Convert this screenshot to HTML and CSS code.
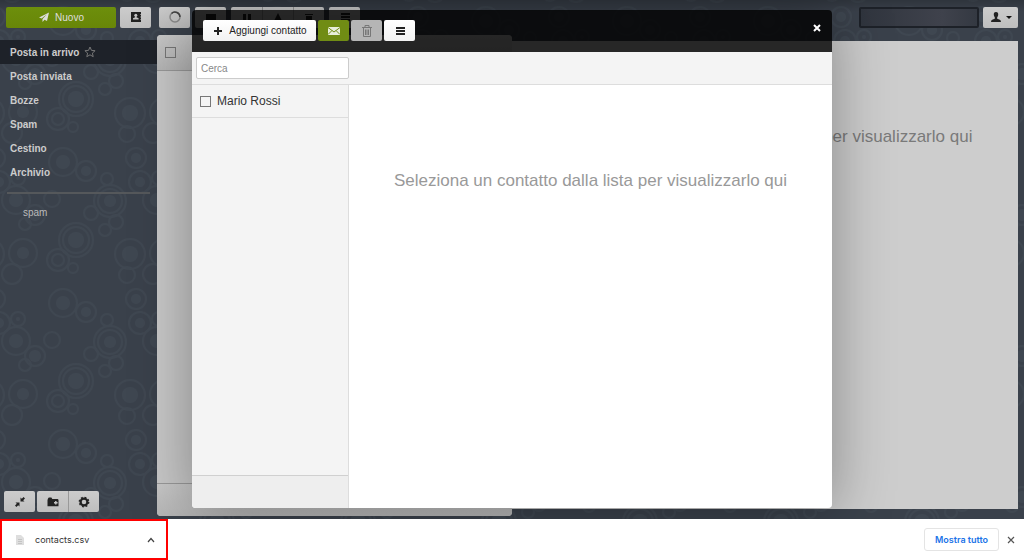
FILE: index.html
```
<!DOCTYPE html>
<html lang="it">
<head>
<meta charset="utf-8">
<title>Posta in arrivo</title>
<link rel="stylesheet" href="styles.css">
</head>
<body>
<div class="app">
  <header class="topbar">
    <div class="topbar-side">
      <button class="btn btn-new" type="button">
        <svg class="icon" viewBox="0 0 12 12" aria-hidden="true"><path fill="currentColor" d="M11 1.500 1 6.500l2.600 1L9 3.300 4.500 8v3l2-2.200L9 10z"/></svg>
        Nuovo
      </button>
      <button class="btn dim" type="button" aria-label="Rubrica">
        <svg class="icon" viewBox="0 0 12 12" aria-hidden="true"><path fill="currentColor" d="M1 1h10v2h-.6v1h.6v1.600h-.6v1h.6v1.600h-.6V9h.6v2H1z"/><circle cx="5.800" cy="4.300" r="1.500" fill="#c5c5c5"/><path fill="#c5c5c5" d="M5.200 5h1.200v1.200L8.600 7.300v1.200H3V7.300l2.200-1.100z"/></svg>
      </button>
    </div>
    <div class="topbar-tools">
      <button class="btn dim" type="button" aria-label="Aggiorna">
        <svg class="icon" viewBox="0 0 12 12" aria-hidden="true"><circle cx="6" cy="6" r="5" fill="none" stroke="#8a8a8a" stroke-width="1.500"/><path d="M2.500 2.500a5 5 0 0 1 8.500 3.500" fill="none" stroke="#444" stroke-width="1.500"/></svg>
      </button>
      <button class="btn dim" type="button" aria-label="Rispondi">
        <svg class="icon" viewBox="0 0 12 12" aria-hidden="true"><path fill="currentColor" d="M1 3h10v7H1z"/></svg>
      </button>
      <div class="group">
        <button class="btn dim" type="button" aria-label="Sposta"><svg class="icon" viewBox="0 0 12 12" aria-hidden="true"><path fill="currentColor" d="M2 3h3v7H2zM7 3h3v7H7z"/></svg></button>
        <button class="btn dim" type="button" aria-label="Segnala"><svg class="icon" viewBox="0 0 12 12" aria-hidden="true"><path fill="currentColor" d="M6 2l4 8H2z"/></svg></button>
        <button class="btn dim" type="button" aria-label="Elimina"><svg class="icon" viewBox="0 0 12 12" aria-hidden="true"><path fill="currentColor" d="M2 3h8v1H2zM3 5h6v6H3z"/></svg></button>
      </div>
      <button class="btn dim" type="button" aria-label="Altro">
        <svg class="icon" viewBox="0 0 12 12" aria-hidden="true"><path fill="currentColor" d="M2 2h9v2H2zM2 5h9v2H2zM2 8h9v2H2z"/></svg>
      </button>
    </div>
    <input class="account" type="text" aria-label="Account" readonly>
    <button class="btn dim user" type="button" aria-label="Profilo">
      <svg class="icon" viewBox="0 0 12 12" aria-hidden="true"><path fill="currentColor" d="M6 1C4.300 1 3.600 2.300 3.800 4c.1 1 .5 1.700 1 2.200v1.500C3 8.300 1 8.600 1 11h10c0-2.400-2-2.700-3.800-3.300V6.200c.5-.5.9-1.200 1-2.200C8.400 2.300 7.700 1 6 1z"/></svg>
      <span class="caret"></span>
    </button>
  </header>

  <div class="work">
    <aside class="sidebar">
      <nav class="folders">
        <a class="folder active" href="#">Posta in arrivo
          <svg class="icon star" viewBox="0 0 12 12" aria-hidden="true"><path fill="none" stroke="currentColor" d="M6 1l1.500 3.400 3.600.3-2.700 2.400.8 3.600L6 8.800l-3.200 1.900.8-3.600L.9 4.700l3.600-.3z"/></svg>
        </a>
        <a class="folder" href="#">Posta inviata</a>
        <a class="folder" href="#">Bozze</a>
        <a class="folder" href="#">Spam</a>
        <a class="folder" href="#">Cestino</a>
        <a class="folder" href="#">Archivio</a>
      </nav>
      <hr class="rule">
      <a class="subfolder" href="#">spam</a>
      <div class="side-actions">
        <button class="btn dim" type="button" aria-label="Comprimi">
          <svg class="icon" viewBox="0 0 12 12" aria-hidden="true"><path fill="currentColor" d="M6.500 1.500v4h4L9.200 4.200 11 2.400 9.600 1 7.800 2.800zM1.500 6.500h4v4L4.200 9.200 2.400 11 1 9.600l1.800-1.800z"/></svg>
        </button>
        <div class="group">
          <button class="btn dim" type="button" aria-label="Cartelle">
            <svg class="icon" viewBox="0 0 12 12" aria-hidden="true"><path fill="currentColor" d="M1 2.500 1.800 1.600h2.600l.9 1.400h5.400l.8.800v6.400H.5V4z"/><path fill="#c5c5c5" d="M7 6h1.100V4.900h1.400V6h1.100v1.400H9.500v1.100H8.100V7.400H7z"/></svg>
          </button>
          <button class="btn dim" type="button" aria-label="Impostazioni">
            <svg class="icon" viewBox="0 0 12 12" aria-hidden="true"><circle cx="6" cy="6" r="3.400" fill="none" stroke="currentColor" stroke-width="2.200"/><circle cx="6" cy="6" r="4.700" fill="none" stroke="currentColor" stroke-width="1.400" stroke-dasharray="1.850 1.840"/></svg>
          </button>
        </div>
      </div>
    </aside>
    <section class="messages" aria-label="Messaggi">
      <div class="messages-head"><input class="check" type="checkbox" aria-label="Seleziona tutti"></div>
      <div class="messages-foot"></div>
    </section>
    <main class="reader">
      <p class="hint">Seleziona un messaggio dalla lista per visualizzarlo qui</p>
    </main>
  </div>

  <div class="modal" role="dialog" aria-label="Contatti">
    <div class="modal-head">
      <button class="btn btn-add" type="button">
        <svg class="icon" viewBox="0 0 12 12" aria-hidden="true"><path fill="currentColor" d="M5 2h2v3h3v2H7v3H5V7H2V5h3z"/></svg>
        Aggiungi contatto
      </button>
      <button class="btn btn-mail" type="button" aria-label="Scrivi">
        <svg class="icon" viewBox="0 0 12 12" aria-hidden="true"><path fill="#e8eedb" d="M0 2h12v8H0z"/><path fill="none" stroke="#708c14" d="M0 2.500 6 7l6-4.500M0 9.500l4-4M12 9.500l-4-4"/></svg>
      </button>
      <button class="btn btn-off" type="button" aria-label="Elimina contatto" disabled>
        <svg class="icon" viewBox="0 0 12 12" aria-hidden="true"><path fill="none" stroke="currentColor" d="M1 2.500h10M4 2V.5h4V2M2.500 3v8.500h7V3M4.500 4.500V10M6 4.500V10M7.500 4.500V10"/></svg>
      </button>
      <button class="btn" type="button" aria-label="Menu">
        <svg class="icon" viewBox="0 0 12 12" aria-hidden="true"><path fill="currentColor" d="M2 2h9v2H2zM2 5h9v2H2zM2 8h9v2H2z"/></svg>
      </button>
      <button class="close" type="button" aria-label="Chiudi">
        <svg class="glyph" viewBox="0 0 8 8" aria-hidden="true"><path stroke="#fff" stroke-width="2" d="m1 1 6 6M7 1 1 7"/></svg>
      </button>
    </div>
    <div class="modal-search"><input class="search" type="search" placeholder="Cerca" aria-label="Cerca"></div>
    <div class="modal-body">
      <div class="contacts">
        <label class="contact"><input class="check" type="checkbox">Mario Rossi</label>
        <div class="contacts-foot"></div>
      </div>
      <p class="hint">Seleziona un contatto dalla lista per visualizzarlo qui</p>
    </div>
  </div>
</div>

<footer class="downloads">
  <button class="download" type="button">
    <svg class="icon" viewBox="0 0 12 12" aria-hidden="true"><path fill="#dedede" d="M2 1h5l3 3v7H2z"/><path stroke="#c4c4c4" d="M4 5.500h4M4 7.500h4M4 9.500h4"/></svg>
    <span class="filename">contacts.csv</span>
    <svg class="glyph" viewBox="0 0 8 8" aria-hidden="true"><path fill="none" stroke="#444" stroke-width="1.200" d="m1 6 3-3.500L7 6"/></svg>
  </button>
  <button class="show-all" type="button">Mostra tutto</button>
  <button class="close-bar" type="button" aria-label="Chiudi barra">
    <svg class="glyph" viewBox="0 0 8 8" aria-hidden="true"><path stroke="#555" stroke-width="1.200" d="m1 1 6 6M7 1 1 7"/></svg>
  </button>
</footer>
</body>
</html>
```
FILE: styles.css
```
* { box-sizing: border-box; }
body {
  margin: 0;
  height: 100vh;
  display: flex;
  flex-direction: column;
  overflow: hidden;
  font-family: "Liberation Sans", Arial, sans-serif;
  font-size: 10px;
  color: #333;
}
button, input { font: inherit; color: inherit; margin: 0; }
button { border: 0; background: none; padding: 0; }
a { text-decoration: none; }
.icon { width: 12px; height: 12px; flex: none; }
.glyph { width: 8px; height: 8px; flex: none; }

.app {
  position: relative;
  flex: 1;
  min-height: 0;
  display: flex;
  flex-direction: column;
  overflow: hidden;
  background-color: #3a414b;
  background-image: url("data:image/svg+xml,%3Csvg xmlns='http://www.w3.org/2000/svg' width='141' height='141'%3E%3Cg fill='none' stroke='%233f4751' stroke-width='2'%3E%3Ccircle cx='63' cy='17' r='14'/%3E%3Ccircle cx='86' cy='26' r='10'/%3E%3Ccircle cx='18' cy='33' r='7'/%3E%3Ccircle cx='107' cy='34' r='6'/%3E%3Ccircle cx='136' cy='13' r='10'/%3E%3Ccircle cx='-5' cy='13' r='10'/%3E%3Ccircle cx='140' cy='37' r='11'/%3E%3Ccircle cx='-1' cy='37' r='11'/%3E%3Ccircle cx='16' cy='55' r='14'/%3E%3Ccircle cx='52' cy='54' r='8'/%3E%3Ccircle cx='110' cy='56' r='16'/%3E%3Ccircle cx='110' cy='56' r='12'/%3E%3Ccircle cx='35' cy='70' r='10'/%3E%3Ccircle cx='25' cy='79' r='6'/%3E%3Ccircle cx='91' cy='68' r='7'/%3E%3Ccircle cx='116' cy='77' r='7'/%3E%3Ccircle cx='105' cy='85' r='6'/%3E%3Ccircle cx='76' cy='95' r='17'/%3E%3Ccircle cx='76' cy='95' r='13'/%3E%3Ccircle cx='23' cy='108' r='14'/%3E%3Ccircle cx='58' cy='115' r='11'/%3E%3Ccircle cx='58' cy='115' r='6'/%3E%3Ccircle cx='73' cy='123' r='5'/%3E%3Ccircle cx='130' cy='109' r='15'/%3E%3Ccircle cx='-11' cy='109' r='15'/%3E%3Ccircle cx='12' cy='129' r='10'/%3E%3Ccircle cx='127' cy='130' r='8'/%3E%3C/g%3E%3Cg fill='%233f4751'%3E%3Ccircle cx='63' cy='17' r='7'/%3E%3Ccircle cx='86' cy='26' r='5'/%3E%3Ccircle cx='18' cy='33' r='2'/%3E%3Ccircle cx='16' cy='55' r='7'/%3E%3Ccircle cx='110' cy='56' r='6'/%3E%3Ccircle cx='35' cy='70' r='6'/%3E%3Ccircle cx='76' cy='95' r='8'/%3E%3Ccircle cx='23' cy='108' r='6'/%3E%3Ccircle cx='130' cy='109' r='8'/%3E%3Ccircle cx='136' cy='13' r='5'/%3E%3Ccircle cx='140' cy='37' r='5'/%3E%3Ccircle cx='-1' cy='37' r='5'/%3E%3C/g%3E%3C/svg%3E");
  background-position: 0 4px;
}

.btn {
  display: inline-flex;
  align-items: center;
  justify-content: center;
  gap: 5px;
  width: 31px;
  height: 21px;
  flex: none;
  border-radius: 2px;
  background: linear-gradient(#fff, #f2f2f2);
  color: #222;
}
.dim { background: linear-gradient(#ccc, #bebebe); }
.group { display: flex; }
.group .btn { border-radius: 0; }
.group .btn + .btn { border-left: 1px solid #999; }
.group .btn:first-child { border-radius: 2px 0 0 2px; }
.group .btn:last-child { border-radius: 0 2px 2px 0; }

.topbar {
  display: flex;
  align-items: center;
  height: 35px;
  flex: none;
  padding: 0 6px 1px;
  background: linear-gradient(rgba(0, 0, 0, .2), rgba(0, 0, 0, 0) 12px);
}
.topbar-side { display: flex; gap: 4px; width: 153px; }
.btn-new { width: 110px; background: linear-gradient(#6d8f0c, #688608); color: #ddd; }
.topbar-tools { display: flex; gap: 5px; flex: 1; }
.account {
  width: 120px;
  height: 21px;
  margin-right: 4px;
  border: 2px solid #1d2128;
  border-radius: 2px;
  background: linear-gradient(90deg, #30353e, #3f424c 70%, #343942);
}
.user { width: 35px; gap: 4px; }
.caret { border: 3px solid transparent; border-top-color: #111; border-bottom: 0; }

.work { flex: 1; min-height: 0; display: flex; padding-right: 6px; }

.sidebar {
  width: 157px;
  flex: none;
  display: flex;
  flex-direction: column;
  padding: 5px 0 7px;
}
.folder {
  display: flex;
  align-items: center;
  gap: 5px;
  height: 24px;
  padding-left: 10px;
  font-weight: bold;
  color: #ccc;
}
.folder.active { background: #1e2229; }
.star { color: #777; }
.rule { width: 143px; height: 2px; margin: 8px 0 0 7px; border: 0; background: #55585b; }
.subfolder { padding: 13px 0 0 23px; color: #bbb; }
.side-actions { display: flex; gap: 2px; margin-top: auto; padding-left: 4px; }

.messages {
  width: 355px;
  flex: none;
  display: flex;
  flex-direction: column;
  margin-bottom: 3px;
  border-radius: 4px;
  background: #c8c8c8;
}
.messages-head { height: 36px; padding: 12px 8px; border-bottom: 1px solid #999; border-radius: 4px 4px 0 0; background: linear-gradient(#c8c8c8, #b6b6b6); }
.messages-foot { height: 33px; margin-top: auto; border-top: 1px solid #999; border-radius: 0 0 4px 4px; background: linear-gradient(#c8c8c8, #b6b6b6); }
.check {
  appearance: none;
  display: block;
  width: 11px;
  height: 11px;
  border: 1px solid #777;
}
.reader { flex: 1; min-width: 0; margin: 6px 0 10px; background: #cdcdcd; }
.hint {
  flex: 1;
  margin: 0;
  padding-top: 86px;
  text-align: center;
  font-size: 17px;
  line-height: 20px;
  white-space: nowrap;
  color: #999;
}
.reader .hint { color: #7a7a7a; }

.modal {
  position: absolute;
  inset: 10px 0 11px;
  width: 62.5%;
  margin: 0 auto;
  display: flex;
  flex-direction: column;
  border-radius: 4px;
  box-shadow: 0 3px 60px rgba(0, 0, 0, .35);
}
.modal-head {
  display: flex;
  align-items: center;
  gap: 2px;
  height: 42px;
  flex: none;
  padding: 0 11px 1px;
  border-radius: 4px 4px 0 0;
  background: rgba(0, 0, 0, .81);
}
.btn-add { width: 113px; }
.btn-mail { background: #708c14; }
.btn-off { background: #b5b5b5; color: #777; }
.close { display: flex; margin: 0 0 5px auto; }
.modal-search { height: 33px; flex: none; padding: 5px 4px; border-bottom: 1px solid #ddd; background: #f4f4f4; }
.search {
  display: block;
  width: 153px;
  height: 22px;
  padding: 0 4px;
  border: 1px solid #ccc;
  border-radius: 2px;
  background: #fff;
}
.search::placeholder { color: #888; opacity: 1; }
.modal-body { flex: 1; min-height: 0; display: flex; border-radius: 0 0 4px 4px; background: #fff; }
.contacts {
  width: 157px;
  flex: none;
  display: flex;
  flex-direction: column;
  border-right: 1px solid #ddd;
  border-radius: 0 0 0 4px;
  background: #f4f4f4;
}
.contact { display: flex; align-items: center; gap: 6px; height: 33px; padding-left: 8px; border-bottom: 1px solid #ddd; font-size: 12px; }
.contacts-foot { height: 33px; margin-top: auto; border-top: 1px solid #d0d0d0; border-radius: 0 0 0 4px; background: #eee; }

.downloads { display: flex; align-items: center; height: 41px; flex: none; padding-right: 9px; background: #fff; }
.download {
  display: flex;
  align-items: center;
  gap: 9px;
  width: 168px;
  height: 41px;
  padding: 0 11px 0 12px;
  border: 2px solid #f00;
  font-family: Inter, sans-serif;
  font-size: 9px;
  text-align: left;
}
.filename { flex: 1; }
.show-all {
  width: 75px;
  height: 23px;
  margin-left: auto;
  border: 1px solid #e4e4e4;
  border-radius: 3px;
  font-family: Inter, sans-serif;
  font-size: 9px;
  font-weight: 600;
  color: #1a73e8;
}
.close-bar { display: flex; margin-left: 8px; }
```
